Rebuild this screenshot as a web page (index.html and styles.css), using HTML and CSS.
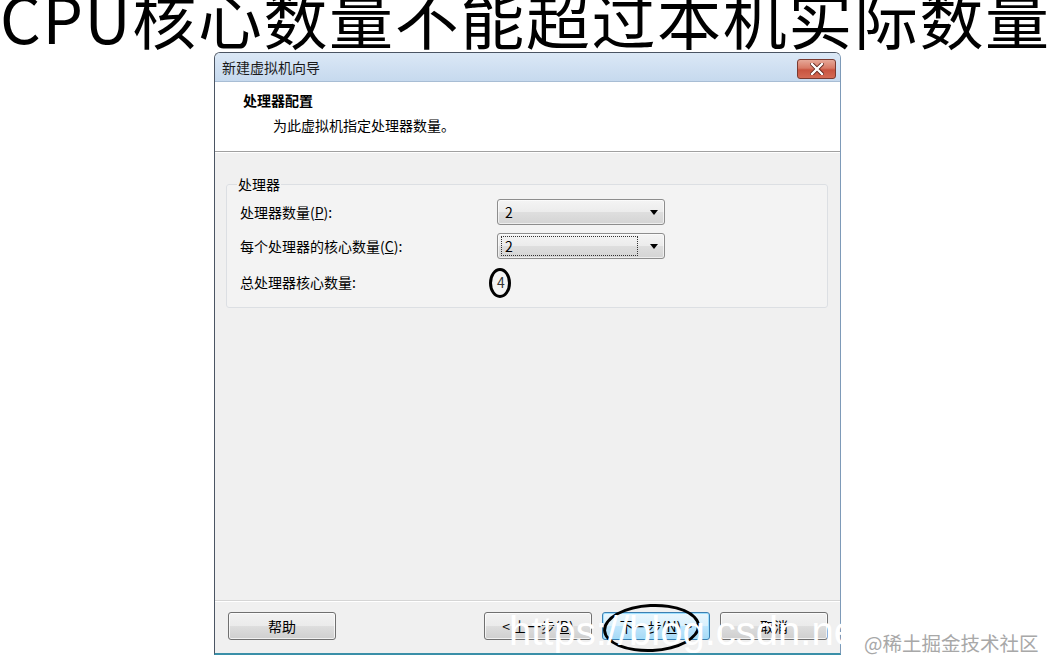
FILE: index.html
```html
<!DOCTYPE html>
<html lang="zh-CN">
<head>
<meta charset="utf-8">
<title>CPU核心数量</title>
<link rel="stylesheet" href="styles.css">
</head>
<body>
<div class="page">
  <div class="headline"><h1>CPU核心数量不能超过本机实际数量</h1></div>

  <div class="dialog">
    <div class="titlebar">
      <span class="wintitle">新建虚拟机向导</span>
      <div class="close">
        <svg width="14" height="12" viewBox="0 0 14 12"><path d="M2 1 L12 11 M12 1 L2 11" stroke="#5a2018" stroke-width="4" stroke-linecap="square"/><path d="M2 1 L12 11 M12 1 L2 11" stroke="#ffffff" stroke-width="2.4" stroke-linecap="square"/></svg>
      </div>
    </div>

    <div class="header">
      <div class="h-title">处理器配置</div>
      <div class="h-sub">为此虚拟机指定处理器数量。</div>
    </div>

    <div class="content">
      <fieldset class="group">
        <legend>处理器</legend>
        <div class="row">
          <span class="label">处理器数量(<u>P</u>):</span>
          <div class="combo"><span class="val">2</span><span class="arrow"></span></div>
        </div>
        <div class="row">
          <span class="label">每个处理器的核心数量(<u>C</u>):</span>
          <div class="combo"><span class="val focus">2</span><span class="arrow"></span></div>
        </div>
        <div class="row total">
          <span class="label">总处理器核心数量:</span>
          <span class="count">4</span>
        </div>
      </fieldset>
    </div>

    <div class="footer">
      <button class="btn">帮助</button>
      <div class="spacer"></div>
      <button class="btn">&lt; 上一步(<u>B</u>)</button>
      <button class="btn default">下一步(<u>N</u>) &gt;</button>
      <button class="btn">取消</button>
    </div>
  </div>

  <div class="ring ring-count"></div>
  <div class="ring ring-next"></div>
  <div class="watermark">https://blog.csdn.net</div>
  <div class="credit">@稀土掘金技术社区</div>
</div>
</body>
</html>
```

FILE: styles.css
```css
* { box-sizing: border-box; }

html, body {
  margin: 0;
  padding: 0;
  background: #ffffff;
}

body {
  font-family: "Noto Sans CJK SC", "Noto Sans", sans-serif;
  color: #000;
  width: 1056px;
  height: 662px;
  overflow: hidden;
}

.page {
  position: relative;
  width: 1056px;
  height: 662px;
}

.headline {
  height: 52px;
  overflow: hidden;
}

.headline h1 {
  margin: -16px 0 0 0;
  font-family: "Noto Sans CJK SC", sans-serif;
  font-weight: 400;
  font-size: 64px;
  line-height: 64px;
  letter-spacing: 1.6px;
  white-space: nowrap;
  color: #000;
}

.dialog {
  margin-left: 214px;
  width: 627px;
  height: 603px;
  border: 1px solid #4b5563;
  border-right-color: #7d9ab8;
  border-bottom: 2px solid #3a8fa8;
  border-radius: 6px 6px 0 0;
  display: flex;
  flex-direction: column;
  background: #f0f0f0;
  overflow: hidden;
}

.titlebar {
  height: 29px;
  flex: none;
  background: linear-gradient(#dbe8f6, #c6d9ee);
  display: flex;
  align-items: center;
  justify-content: space-between;
  padding: 0 4px 0 7px;
  border-bottom: 1px solid #a8bdd4;
}

.wintitle {
  font-size: 14px;
  line-height: 16px;
  color: #1a1a1a;
}

.close {
  width: 39px;
  height: 20px;
  border: 1px solid #7a3a30;
  border-radius: 3px;
  background: linear-gradient(#e6a898 0%, #d87a66 45%, #c85440 55%, #d46a54 100%);
  display: flex;
  align-items: center;
  justify-content: center;
  margin-top: 4px;
}

.header {
  height: 70px;
  flex: none;
  background: #ffffff;
  border-bottom: 1px solid #a0a0a0;
  padding: 8px 0 0 28px;
}

.h-title {
  font-size: 14px;
  font-weight: bold;
  line-height: 20px;
}

.h-sub {
  font-size: 14px;
  line-height: 20px;
  margin-top: 5px;
  padding-left: 30px;
}

.content {
  flex: 1;
  background: #f0f0f0;
  border-top: 1px solid #ffffff;
  padding: 22px 12px 0 11px;
}

.group {
  margin: 0;
  width: 602px;
  border: 1px solid #dcdfe3;
  border-radius: 3px;
  padding: 2px 0 6px 13px;
  background: #f3f3f3;
}

.group legend {
  font-size: 14px;
  line-height: 18px;
  padding: 0 1px;
  margin-left: -3px;
}

.row {
  display: flex;
  align-items: center;
  height: 34px;
}

.row.total {
  height: 38px;
}

.label {
  width: 257px;
  font-size: 14px;
  line-height: 18px;
  flex: none;
}

.combo {
  width: 168px;
  height: 26px;
  border: 1px solid #8d8d8d;
  border-radius: 3px;
  background: linear-gradient(#f4f4f4 0%, #ececec 48%, #dedede 52%, #d4d4d4 100%);
  display: flex;
  align-items: center;
  padding: 0 6px 0 3px;
  box-shadow: inset 0 0 0 1px rgba(255,255,255,0.6);
}

.val {
  flex: 1;
  font-size: 14px;
  line-height: 18px;
  padding: 0 3px;
  border: 1px dotted transparent;
}

.val.focus {
  border-color: #333;
  margin-right: 12px;
  height: 20px;
}

.arrow {
  width: 0;
  height: 0;
  border-left: 4px solid transparent;
  border-right: 4px solid transparent;
  border-top: 5px solid #000;
}

.count {
  font-size: 14px;
  line-height: 18px;
  color: #333;
  padding-left: 0;
}

.footer {
  height: 53px;
  flex: none;
  border-top: 1px solid #d5d5d5;
  box-shadow: inset 0 1px 0 #ffffff;
  background: #f0f0f0;
  display: flex;
  align-items: flex-start;
  padding: 11px 12px 0 13px;
  gap: 10px;
}

.spacer { flex: 1; }

.btn {
  width: 108px;
  height: 28px;
  border: 1px solid #707070;
  border-radius: 3px;
  background: linear-gradient(#f2f2f2 0%, #ebebeb 48%, #dddddd 52%, #cfcfcf 100%);
  box-shadow: inset 0 0 0 1px rgba(255,255,255,0.7);
  font-family: "Noto Sans CJK SC", sans-serif;
  font-size: 14px;
  color: #000;
  padding: 0;
}

.btn.default {
  border-color: #3c7fb1;
  background: linear-gradient(#eaf6fd 0%, #d9f0fc 48%, #bee6fd 52%, #a7d9f5 100%);
  box-shadow: inset 0 0 0 1px #9fe0ff;
}

.ring {
  position: absolute;
  border: 3px solid #000;
  border-radius: 50%;
}

.ring-count {
  left: 489px;
  top: 268px;
  width: 22px;
  height: 30px;
}

.ring-next {
  left: 603px;
  top: 604px;
  width: 97px;
  height: 48px;
  transform: rotate(-3deg);
}

.watermark {
  position: absolute;
  left: 509px;
  top: 607px;
  font-family: "Liberation Sans", Arial, sans-serif;
  font-size: 40px;
  line-height: 48px;
  color: #ffffff;
  white-space: nowrap;
}

.credit {
  position: absolute;
  left: 864px;
  top: 630px;
  font-family: "Noto Sans CJK SC", sans-serif;
  font-size: 19.5px;
  line-height: 26px;
  color: #a8a8a8;
  white-space: nowrap;
}
```
